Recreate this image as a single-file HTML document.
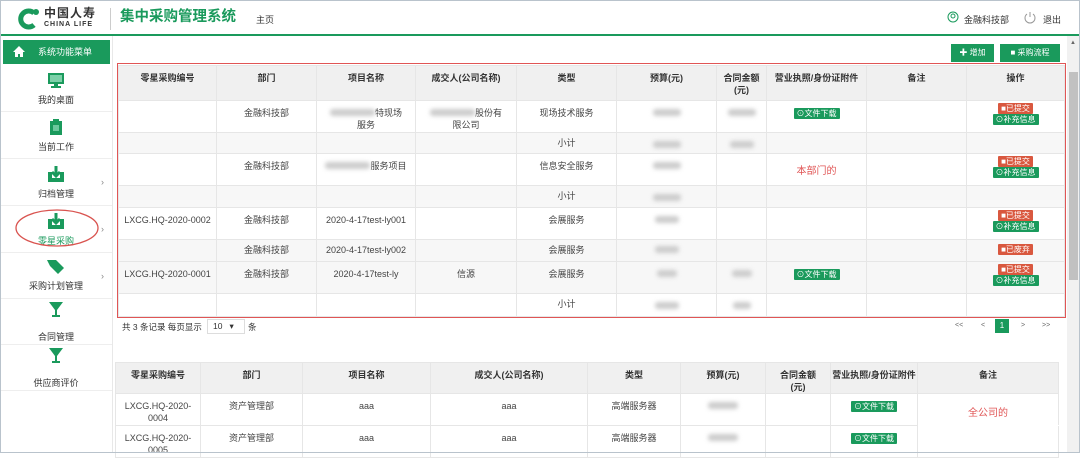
<!DOCTYPE html>
<html><head><meta charset="utf-8"><style>
*{margin:0;padding:0;box-sizing:border-box}
body{width:1080px;height:453px;overflow:hidden;background:#fff;font-family:"Liberation Sans","Noto Sans CJK SC",sans-serif;color:#333;position:relative;font-size:9px}
.a{position:absolute}
.g{color:#1a9a5c}
table{position:absolute;border-collapse:collapse;table-layout:fixed}
td{border:1px solid #e6e6e6;text-align:center;font-size:9px;color:#444;vertical-align:top;padding-top:6px;line-height:12px}
th{border:1px solid #e6e6e6;background:#f0f0f0;font-size:9px;font-weight:bold;color:#333;vertical-align:top;padding-top:6px;line-height:12px}
tr.s td{background:#f7f7f7}
.b{display:inline-block;width:40px;height:7px;background:#ccc;filter:blur(2px);border-radius:3px}
.tag{display:inline-block;font-size:8px;color:#fff;padding:0 3px;line-height:11px;border-radius:1px}
.gr{background:#1a9a5c}.rd{background:#d9583f}
.mi{position:absolute;left:0;width:112px;text-align:center;font-size:9px;color:#333;border-bottom:1px solid #eee}
</style></head><body>
<div class="a" style="left:0;top:0;width:1080px;height:453px;border:1px solid #b9c3cc;z-index:5;pointer-events:none"></div>
<!-- header -->
<div class="a" style="left:0;top:34px;width:1080px;height:2px;background:#1a9a5c"></div>
<svg class="a" style="left:15px;top:8px" width="26" height="22" viewBox="0 0 26 22"><path d="M19 5 A8 8 0 1 0 19 17" fill="none" stroke="#1a9a5c" stroke-width="5"/><circle cx="21" cy="4" r="3" fill="#1a9a5c"/></svg>
<div class="a" style="left:44px;top:6px;font-size:12px;line-height:14px;font-weight:bold;color:#333;letter-spacing:1px">中国人寿</div>
<div class="a" style="left:44px;top:21px;font-size:7px;line-height:8px;font-weight:bold;color:#333;letter-spacing:1px">CHINA LIFE</div>
<div class="a" style="left:110px;top:8px;width:1px;height:22px;background:#ccc"></div>
<div class="a g" style="left:120px;top:8px;font-size:14.5px;line-height:18px;font-weight:bold">集中采购管理系统</div>
<div class="a" style="left:256px;top:13px;font-size:9px">主页</div>
<svg class="a" style="left:947px;top:11px" width="12" height="12"><circle cx="6" cy="6" r="5" fill="none" stroke="#1a9a5c"/><circle cx="6" cy="5" r="2" fill="none" stroke="#1a9a5c"/></svg>
<div class="a" style="left:964px;top:13px;font-size:9px">金融科技部</div>
<svg class="a" style="left:1023px;top:10px" width="14" height="14"><path d="M4 4 A5 5 0 1 0 10 4" fill="none" stroke="#999" stroke-width="1"/><path d="M7 2 V7" stroke="#999"/></svg>
<div class="a" style="left:1043px;top:13px;font-size:9px">退出</div>
<!-- sidebar -->
<div class="a" style="left:112px;top:36px;width:1px;height:417px;background:#e8e8e8"></div>
<div class="a" style="left:3px;top:40px;width:107px;height:24px;background:#1a9a5c;color:#fff;font-size:9px;line-height:24px;padding-left:35px">系统功能菜单</div>
<svg class="a" style="left:13px;top:46px" width="12" height="11"><path d="M6 0 L12 6 H10 V11 H7 V8 H5 V11 H2 V6 H0 Z" fill="#fff"/></svg>
<div class="mi" style="top:66px;height:46px"><svg style="margin-top:7px" width="16" height="15"><rect x="0" y="0" width="16" height="11" fill="#1a9a5c"/><rect x="2" y="2" width="12" height="7" fill="#7cd0a8"/><rect x="6" y="11" width="4" height="2" fill="#1a9a5c"/><rect x="3" y="13" width="10" height="2" fill="#1a9a5c"/></svg><div style="margin-top:3px">我的桌面</div></div>
<div class="mi" style="top:112px;height:47px"><svg style="margin-top:7px" width="12" height="16"><rect x="0" y="2" width="12" height="14" fill="#1a9a5c"/><rect x="3" y="0" width="6" height="3" fill="#1a9a5c"/><rect x="3" y="6" width="6" height="6" fill="#6cc79c"/></svg><div style="margin-top:3px">当前工作</div></div>
<div class="mi" style="top:159px;height:47px"><svg style="margin-top:7px" width="16" height="16"><path d="M0 6 H4 V12 H12 V6 H16 V16 H0Z" fill="#1a9a5c"/><path d="M8 0 V9 M4 6 L8 10 L12 6" stroke="#1a9a5c" stroke-width="3" fill="none"/></svg><div style="margin-top:3px">归档管理</div><span class="a" style="left:101px;top:18px;color:#888">›</span></div>
<div class="mi" style="top:206px;height:47px"><svg style="margin-top:7px" width="16" height="16"><path d="M0 6 H4 V12 H12 V6 H16 V16 H0Z" fill="#1a9a5c"/><path d="M8 0 V9 M4 6 L8 10 L12 6" stroke="#1a9a5c" stroke-width="3" fill="none"/></svg><div style="margin-top:3px;color:#1a9a5c">零星采购</div><span class="a" style="left:101px;top:18px;color:#888">›</span></div>
<svg class="a" style="left:14px;top:208px" width="86" height="40"><ellipse cx="43" cy="20" rx="41" ry="18" fill="none" stroke="#d9534f" stroke-width="1.3"/></svg>
<div class="mi" style="top:253px;height:46px"><svg style="margin-top:7px" width="18" height="14"><path d="M0 0 H9 L17 8 L11 14 L3 6 Z" fill="#1a9a5c"/></svg><div style="margin-top:3px">采购计划管理</div><span class="a" style="left:101px;top:18px;color:#888">›</span></div>
<div class="mi" style="top:299px;height:46px"><svg style="margin-top:3px" width="14" height="16"><path d="M0 0 H14 L8 8 V13 H11 V15 H3 V13 H6 V8 Z" fill="#1a9a5c"/></svg><div style="margin-top:10px">合同管理</div></div>
<div class="mi" style="top:345px;height:46px"><svg style="margin-top:3px" width="14" height="16"><path d="M0 0 H14 L8 8 V13 H11 V15 H3 V13 H6 V8 Z" fill="#1a9a5c"/></svg><div style="margin-top:10px">供应商评价</div></div>
<!-- buttons -->
<div class="a" style="left:951px;top:44px;width:43px;height:18px;background:#1a9a5c;color:#fff;font-size:8px;line-height:18px;text-align:center">✚ 增加</div>
<div class="a" style="left:1000px;top:44px;width:60px;height:18px;background:#1a9a5c;color:#fff;font-size:8px;line-height:18px;text-align:center">■ 采购流程</div>
<!-- scrollbar -->
<div class="a" style="left:1067px;top:36px;width:12px;height:417px;background:#f1f1f1"></div>
<div class="a" style="left:1069px;top:72px;width:9px;height:208px;background:#c1c1c1"></div>
<div class="a" style="left:1070px;top:40px;font-size:6px;color:#666">▲</div>
<!-- table 1 -->
<div class="a" style="left:117px;top:63px;width:949px;height:255px;border:1.5px solid #e05555;z-index:3"></div>
<table style="left:118px;top:65px;width:946px">
<colgroup><col style="width:98px"><col style="width:100px"><col style="width:99px"><col style="width:101px"><col style="width:100px"><col style="width:100px"><col style="width:50px"><col style="width:100px"><col style="width:100px"><col style="width:98px"></colgroup>
<tr style="height:35px"><th>零星采购编号</th><th>部门</th><th>项目名称</th><th>成交人(公司名称)</th><th>类型</th><th>预算(元)</th><th>合同金额<br>(元)</th><th>营业执照/身份证附件</th><th>备注</th><th>操作</th></tr>
<tr style="height:32px"><td></td><td>金融科技部</td><td><span class="b" style="width:45px"></span>特现场<br>服务</td><td><span class="b" style="width:45px"></span>股份有<br>限公司</td><td>现场技术服务</td><td><span class="b" style="width:28px"></span></td><td><span class="b" style="width:28px"></span></td><td><span class="tag gr">⊙文件下载</span></td><td></td><td style="padding-top:2px;line-height:11px"><span class="tag rd">■已提交</span><br><span class="tag gr">⊙补充信息</span></td></tr>
<tr class="s" style="height:21px"><td></td><td></td><td></td><td></td><td style="padding-top:4px">小计</td><td><span class="b" style="width:28px"></span></td><td><span class="b" style="width:24px"></span></td><td></td><td></td><td></td></tr>
<tr style="height:32px"><td></td><td>金融科技部</td><td><span class="b" style="width:45px"></span>服务项目</td><td></td><td>信息安全服务</td><td><span class="b" style="width:28px"></span></td><td></td><td style="color:#e05555;font-size:10px;padding-top:12px">本部门的</td><td></td><td style="padding-top:2px;line-height:11px"><span class="tag rd">■已提交</span><br><span class="tag gr">⊙补充信息</span></td></tr>
<tr class="s" style="height:22px"><td></td><td></td><td></td><td></td><td style="padding-top:4px">小计</td><td><span class="b" style="width:28px"></span></td><td></td><td></td><td></td><td></td></tr>
<tr style="height:32px"><td>LXCG.HQ-2020-0002</td><td>金融科技部</td><td>2020-4-17test-ly001</td><td></td><td>会展服务</td><td><span class="b" style="width:24px"></span></td><td></td><td></td><td></td><td style="padding-top:2px;line-height:11px"><span class="tag rd">■已提交</span><br><span class="tag gr">⊙补充信息</span></td></tr>
<tr class="s" style="height:22px"><td style="padding-top:4px"></td><td style="padding-top:4px">金融科技部</td><td style="padding-top:4px">2020-4-17test-ly002</td><td></td><td style="padding-top:4px">会展服务</td><td style="padding-top:4px"><span class="b" style="width:24px"></span></td><td></td><td></td><td></td><td style="padding-top:3px"><span class="tag rd">■已废弃</span></td></tr>
<tr class="s" style="height:32px"><td>LXCG.HQ-2020-0001</td><td>金融科技部</td><td>2020-4-17test-ly</td><td>信源</td><td>会展服务</td><td><span class="b" style="width:20px"></span></td><td><span class="b" style="width:20px"></span></td><td><span class="tag gr">⊙文件下载</span></td><td></td><td style="padding-top:2px;line-height:11px"><span class="tag rd">■已提交</span><br><span class="tag gr">⊙补充信息</span></td></tr>
<tr style="height:23px"><td></td><td></td><td></td><td></td><td style="padding-top:4px">小计</td><td><span class="b" style="width:24px"></span></td><td><span class="b" style="width:18px"></span></td><td></td><td></td><td></td></tr>
</table>
<!-- pagination -->
<div class="a" style="left:122px;top:321px;font-size:8.5px">共 3 条记录 每页显示</div>
<div class="a" style="left:207px;top:319px;width:38px;height:15px;border:1px solid #ddd;font-size:8.5px;line-height:13px;padding-left:5px">10 &nbsp;&nbsp;▾</div>
<div class="a" style="left:248px;top:321px;font-size:8.5px">条</div>
<div class="a" style="left:955px;top:322px;font-size:7px;color:#666">&lt;&lt;</div>
<div class="a" style="left:981px;top:322px;font-size:7px;color:#666">&lt;</div>
<div class="a" style="left:995px;top:319px;width:14px;height:14px;background:#1a9a5c;color:#fff;font-size:8px;line-height:14px;text-align:center">1</div>
<div class="a" style="left:1021px;top:322px;font-size:7px;color:#666">&gt;</div>
<div class="a" style="left:1042px;top:322px;font-size:7px;color:#666">&gt;&gt;</div>
<!-- table 2 -->
<table style="left:115px;top:362px;width:943px">
<colgroup><col style="width:85px"><col style="width:102px"><col style="width:128px"><col style="width:157px"><col style="width:93px"><col style="width:85px"><col style="width:65px"><col style="width:87px"><col style="width:141px"></colgroup>
<tr style="height:31px"><th>零星采购编号</th><th>部门</th><th>项目名称</th><th>成交人(公司名称)</th><th>类型</th><th>预算(元)</th><th>合同金额<br>(元)</th><th>营业执照/身份证附件</th><th>备注</th></tr>
<tr style="height:32px"><td>LXCG.HQ-2020-<br>0004</td><td>资产管理部</td><td>aaa</td><td>aaa</td><td>高端服务器</td><td><span class="b" style="width:30px"></span></td><td></td><td><span class="tag gr">⊙文件下载</span></td><td style="color:#e05555;font-size:10px;padding-top:14px;border-bottom-color:#fff">全公司的</td></tr>
<tr style="height:32px"><td>LXCG.HQ-2020-<br>0005</td><td>资产管理部</td><td>aaa</td><td>aaa</td><td>高端服务器</td><td><span class="b" style="width:30px"></span></td><td></td><td><span class="tag gr">⊙文件下载</span></td><td></td></tr>
</table>
</body></html>
